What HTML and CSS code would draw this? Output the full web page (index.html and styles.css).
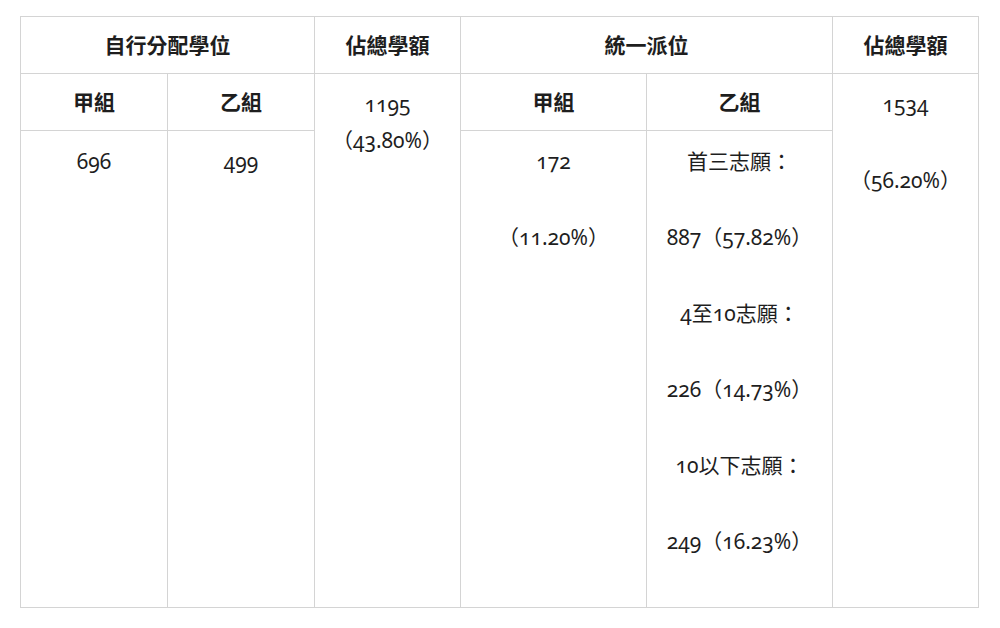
FILE: index.html
```html
<!DOCTYPE html>
<html lang="zh-Hant">
<head>
<meta charset="utf-8">
<title>學位分配</title>
<link rel="stylesheet" href="styles.css">
</head>
<body>
<table class="quota">
  <colgroup>
    <col class="c1"><col class="c2"><col class="c3"><col class="c4"><col class="c5"><col class="c6">
  </colgroup>
  <tr class="head">
    <th colspan="2">自行分配學位</th>
    <th>佔總學額</th>
    <th colspan="2">統一派位</th>
    <th>佔總學額</th>
  </tr>
  <tr class="head">
    <th>甲組</th>
    <th>乙組</th>
    <td rowspan="2" class="tight"><p>1195</p><p>（43.80%）</p></td>
    <th>甲組</th>
    <th>乙組</th>
    <td rowspan="2"><p>1534</p><p>（56.20%）</p></td>
  </tr>
  <tr class="data">
    <td><p>696</p></td>
    <td><p>499</p></td>
    <td><p>172</p><p>（11.20%）</p></td>
    <td class="tall"><p>首三志願：</p><p>887（57.82%）</p><p>4至10志願：</p><p>226（14.73%）</p><p>10以下志願：</p><p>249（16.23%）</p></td>
  </tr>
</table>
</body>
</html>
```
FILE: styles.css
```css
html, body {
  margin: 0;
  padding: 0;
  background: #ffffff;
}
body {
  padding: 16px 21px 0 20px;
  font-family: "Noto Sans", "Noto Sans CJK TC", sans-serif;
  font-variant-numeric: oldstyle-nums;
  color: #1e1e1e;
}
.quota {
  width: 959px;
  border-collapse: collapse;
  table-layout: fixed;
}
.c1, .c2 { width: 147px; }
.c3 { width: 146px; }
.c4, .c5 { width: 186px; }
.c6 { width: 146px; }
.quota th, .quota td {
  border: 1px solid #d4d4d4;
  text-align: center;
  vertical-align: top;
  font-size: 21px;
  line-height: 36px;
}
.quota th {
  font-weight: 700;
  padding: 10px 4px;
  height: 36px;
}
.quota td {
  font-weight: 400;
  padding: 12px 4px;
}
.quota p {
  margin: 40px 0 0 0;
}
.quota p:first-child {
  margin-top: 0;
}
.quota .tight p {
  margin-top: 0;
}
.quota .tall {
  padding-bottom: 48px;
}
```
